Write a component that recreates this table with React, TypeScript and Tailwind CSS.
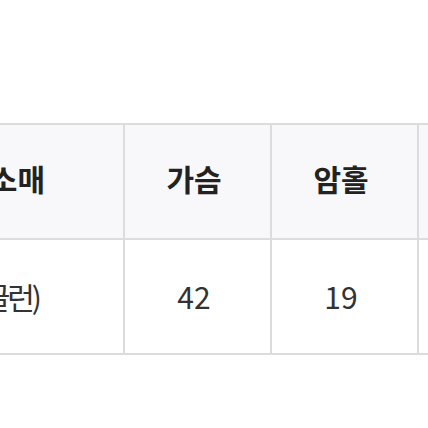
import React from "react";

const headers = ["어깨/소매", "가슴", "암홀", ""];
const values = ["(래글런)", "42", "19", ""];

const App: React.FC = () => {
  return (
    <div
      className="w-[428px] h-[428px] overflow-hidden bg-white"
      style={{ fontFamily: '"Noto Sans CJK KR", "Noto Sans", sans-serif' }}
    >
      <div className="pt-[123px] ml-[-24px]">
        <div className="grid grid-cols-[145px_145px_145px_145px] gap-[2px] p-[2px] bg-[#dcdcdc] w-max">
          {headers.map((h, i) => (
            <div
              key={i}
              className={`h-[113px] bg-[#f8f8fa] flex items-center pb-[6px] text-[30px] font-bold text-[#222] ${
                i === 0 ? "justify-end pr-[78px] whitespace-nowrap" : "justify-center pr-[7px]"
              }`}
            >
              {h}
            </div>
          ))}
          {values.map((v, i) => (
            <div
              key={i}
              className={`h-[113px] bg-white flex items-center text-[30px] text-[#333] ${
                i === 0 ? "justify-end pr-[84px] whitespace-nowrap tracking-[-3px]" : "justify-center pr-[7px]"
              }`}
            >
              {v}
            </div>
          ))}
        </div>
      </div>
    </div>
  );
};

export default App;
